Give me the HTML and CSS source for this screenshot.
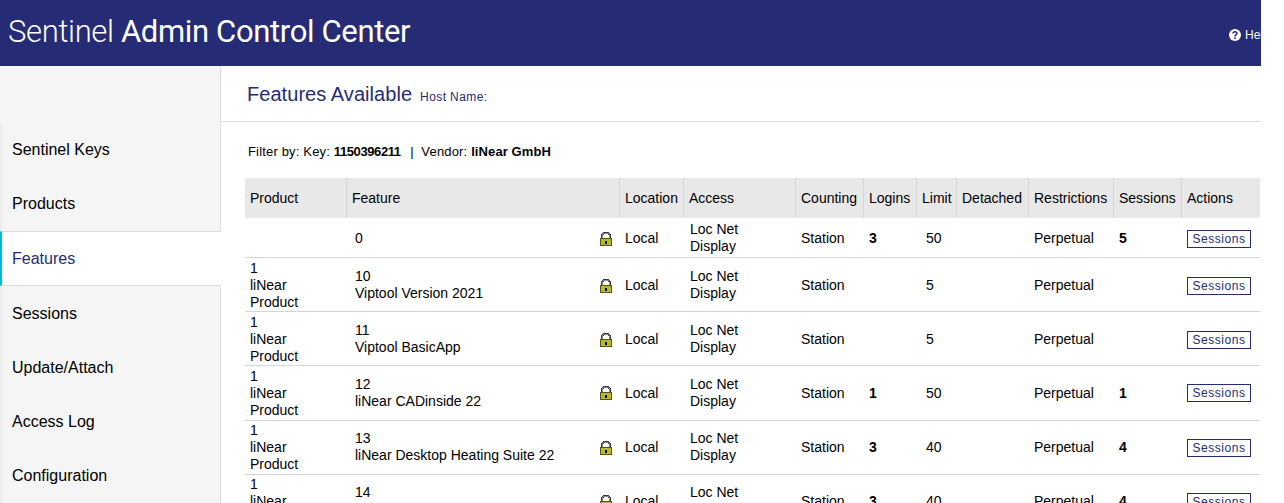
FILE: index.html
```html
<!DOCTYPE html>
<html lang="en">
<head>
<meta charset="utf-8">
<title>Sentinel Admin Control Center</title>
<link rel="stylesheet" href="styles.css">
</head>
<body>
<svg class="defs" width="0" height="0" aria-hidden="true">
  <symbol id="lock" viewBox="0 0 12 14" shape-rendering="crispEdges">
    <path fill="#3a3a3a" d="M3 0h6v1h1v1h1v5H9V3H8V2H4v1H3v4H1V2h1V1h1z"/>
    <path fill="#8a8a8a" d="M3 1h6v1H3zM2 2h1v5H2zM9 2h1v5H9z"/>
    <path fill="#55551a" d="M0 6h12v8H0z"/>
    <path fill="#b8b82e" d="M1 7h10v6H1z"/>
    <path fill="#000" d="M5 9h2v3H5z"/>
  </symbol>
</svg>
<div class="page">
  <header class="topbar">
    <h1 class="brand"><span class="brand-light">Sentinel</span> Admin Control Center</h1>
    <a class="help"><svg class="help-icon" viewBox="0 0 12 12"><circle cx="6" cy="6" r="6" fill="#fff"/><path d="M4 4.6C4 3.4 4.9 2.7 6 2.7s2 .7 2 1.8c0 1.500-2 1.400-2 2.900" fill="none" stroke="#252b75" stroke-width="1.500"/><rect x="5.200" y="8.300" width="1.600" height="1.600" fill="#252b75"/></svg><span>Help</span></a>
  </header>
  <div class="layout">
    <nav class="sidebar">
      <a class="nav-item">Sentinel Keys</a>
      <a class="nav-item">Products</a>
      <a class="nav-item active">Features</a>
      <a class="nav-item">Sessions</a>
      <a class="nav-item">Update/Attach</a>
      <a class="nav-item">Access Log</a>
      <a class="nav-item">Configuration</a>
    </nav>
    <main class="content">
      <div class="page-title"><h2>Features Available</h2><span class="host">Host Name:</span></div>
      <p class="filter">Filter by: Key: <b class="key">1150396211</b> &nbsp;|&nbsp; Vendor: <b class="vendor">liNear GmbH</b></p>
      <table class="grid">
        <colgroup>
          <col class="c-product"><col class="c-feature"><col class="c-lock"><col class="c-location"><col class="c-access"><col class="c-counting"><col class="c-logins"><col class="c-limit"><col class="c-detached"><col class="c-restrictions"><col class="c-sessions"><col class="c-actions">
        </colgroup>
        <thead>
          <tr><th>Product</th><th colspan="2">Feature</th><th>Location</th><th>Access</th><th>Counting</th><th>Logins</th><th>Limit</th><th>Detached</th><th>Restrictions</th><th>Sessions</th><th>Actions</th></tr>
        </thead>
        <tbody>
          <tr class="low">
            <td></td><td class="feat one">0</td><td class="lock"><svg class="lock-icon"><use href="#lock"/></svg></td><td>Local</td><td class="acc">Loc Net<br>Display</td><td>Station</td><td class="num"><b>3</b></td><td class="lim">50</td><td></td><td>Perpetual</td><td class="num"><b>5</b></td><td><a class="btn">Sessions</a></td>
          </tr>
          <tr class="low">
            <td>1<br>liNear<br>Product</td><td class="feat">10<br>Viptool Version 2021</td><td class="lock"><svg class="lock-icon"><use href="#lock"/></svg></td><td>Local</td><td class="acc">Loc Net<br>Display</td><td>Station</td><td class="num"></td><td class="lim">5</td><td></td><td>Perpetual</td><td class="num"></td><td><a class="btn">Sessions</a></td>
          </tr>
          <tr class="low">
            <td>1<br>liNear<br>Product</td><td class="feat">11<br>Viptool BasicApp</td><td class="lock"><svg class="lock-icon"><use href="#lock"/></svg></td><td>Local</td><td class="acc">Loc Net<br>Display</td><td>Station</td><td class="num"></td><td class="lim">5</td><td></td><td>Perpetual</td><td class="num"></td><td><a class="btn">Sessions</a></td>
          </tr>
          <tr class="tall">
            <td>1<br>liNear<br>Product</td><td class="feat">12<br>liNear CADinside 22</td><td class="lock"><svg class="lock-icon"><use href="#lock"/></svg></td><td>Local</td><td class="acc">Loc Net<br>Display</td><td>Station</td><td class="num"><b>1</b></td><td class="lim">50</td><td></td><td>Perpetual</td><td class="num"><b>1</b></td><td><a class="btn">Sessions</a></td>
          </tr>
          <tr class="raised">
            <td>1<br>liNear<br>Product</td><td class="feat">13<br>liNear Desktop Heating Suite 22</td><td class="lock"><svg class="lock-icon"><use href="#lock"/></svg></td><td>Local</td><td class="acc">Loc Net<br>Display</td><td>Station</td><td class="num"><b>3</b></td><td class="lim">40</td><td></td><td>Perpetual</td><td class="num"><b>4</b></td><td><a class="btn">Sessions</a></td>
          </tr>
          <tr class="raised">
            <td>1<br>liNear<br>Product</td><td class="feat">14<br>liNear Desktop Heating Suite 22</td><td class="lock"><svg class="lock-icon"><use href="#lock"/></svg></td><td>Local</td><td class="acc">Loc Net<br>Display</td><td>Station</td><td class="num"><b>3</b></td><td class="lim">40</td><td></td><td>Perpetual</td><td class="num"><b>4</b></td><td><a class="btn">Sessions</a></td>
          </tr>
        </tbody>
      </table>
    </main>
  </div>
</div>
</body>
</html>
```
FILE: styles.css
```css
html, body { margin: 0; padding: 0; height: 100%; background: #fff; overflow: hidden; }
body { font-family: "Liberation Sans", Arial, sans-serif; font-size: 14px; color: #000; }
.defs { position: absolute; }
.page { width: 1261px; height: 503px; overflow: hidden; }
.topbar { height: 66px; background: #252b75; display: flex; align-items: center; justify-content: space-between; color: #fff; }
.brand { margin: -2px 0 0 8px; font-family: Roboto, sans-serif; font-weight: 400; font-size: 31px; letter-spacing: -.35px; line-height: 64px; white-space: nowrap; }
.brand-light { font-weight: 300; }
.help { display: flex; align-items: center; gap: 4px; width: 32px; overflow: hidden; white-space: nowrap; font-size: 12px; margin-top: 4px; flex: none; }
.help-icon { width: 12px; height: 12px; flex: none; }
.layout { display: flex; height: 437px; }
.sidebar { width: 220px; flex: none; background: #f5f5f5; border-right: 1px solid #ddd; padding-top: 57px; display: flex; flex-direction: column; }
.nav-item { height: 54px; line-height: 54px; padding-left: 10px; font-size: 16px; color: #000; border-left: 2px solid #ececec; margin-right: -1px; flex: none; }
.nav-item.active { height: 53px; background: #fff; color: #252b75; border-left: 2px solid #00b8d8; border-top: 1px solid #ddd; border-bottom: 1px solid #ddd; margin-bottom: 1px; }
.content { flex: 1; min-width: 0; }
.page-title { height: 56px; box-sizing: border-box; border-bottom: 1px solid #ddd; padding: 16px 0 0 26px; display: flex; align-items: baseline; gap: 8px; color: #252b75; }
.page-title h2 { margin: 0; font-size: 20px; font-weight: 400; line-height: 24px; letter-spacing: .05px; }
.host { font-size: 12px; letter-spacing: .4px; }
.filter { margin: 22px 0 0 27px; font-size: 13px; line-height: 15px; height: 18px; color: #000; letter-spacing: .17px; }
.filter .key { letter-spacing: -.4px; margin-right: 2px; }
.filter .vendor { letter-spacing: .1px; }
.grid { border-collapse: collapse; table-layout: fixed; width: 1015px; margin: 16px 0 0 24px; }
.c-product { width: 101px; } .c-feature { width: 235px; } .c-lock { width: 38px; } .c-location { width: 64px; } .c-access { width: 112px; } .c-counting { width: 68px; } .c-logins { width: 53px; } .c-limit { width: 40px; } .c-detached { width: 72px; } .c-restrictions { width: 85px; } .c-sessions { width: 68px; } .c-actions { width: 79px; }
.grid th { height: 40px; padding: 0 0 0 5.5px; background: #e8e8e8; font-weight: 400; text-align: left; border-left: 1px solid #d5d5d5; box-sizing: border-box; white-space: nowrap; }
.grid th:first-child { border-left: 0; padding-left: 5px; }
.grid td { padding: 1px 0 1px 6px; line-height: 17px; border-bottom: 1px solid #d5d5d5; height: 37px; white-space: nowrap; vertical-align: middle; }
.grid td:first-child { padding-left: 5px; }
.grid tr.tall td { height: 52px; }
.grid tr.low td { padding-top: 2px; padding-bottom: 0; }
.grid tr.low td.feat, .grid tr.low td.acc { padding-top: 1px; padding-bottom: 1px; }
.grid tr.low td.feat.one { padding-top: 2px; padding-bottom: 0; }
.grid tr.raised td.feat, .grid tr.raised td.acc { padding-top: 0; padding-bottom: 2px; }
.grid td.feat { padding-left: 9px; }
.grid td.lock { padding-left: 0; padding-right: 0; }
.grid td.acc { padding-left: 7px; }
.grid td.lim { padding-left: 10px; }
.lock-icon { display: block; width: 12px; height: 14px; margin: 0 0 0 19px; }
.btn { display: block; width: 62px; height: 16px; line-height: 16px; border: 1px solid #252b75; text-align: center; color: #252b75; font-size: 12px; letter-spacing: .55px; }
```
